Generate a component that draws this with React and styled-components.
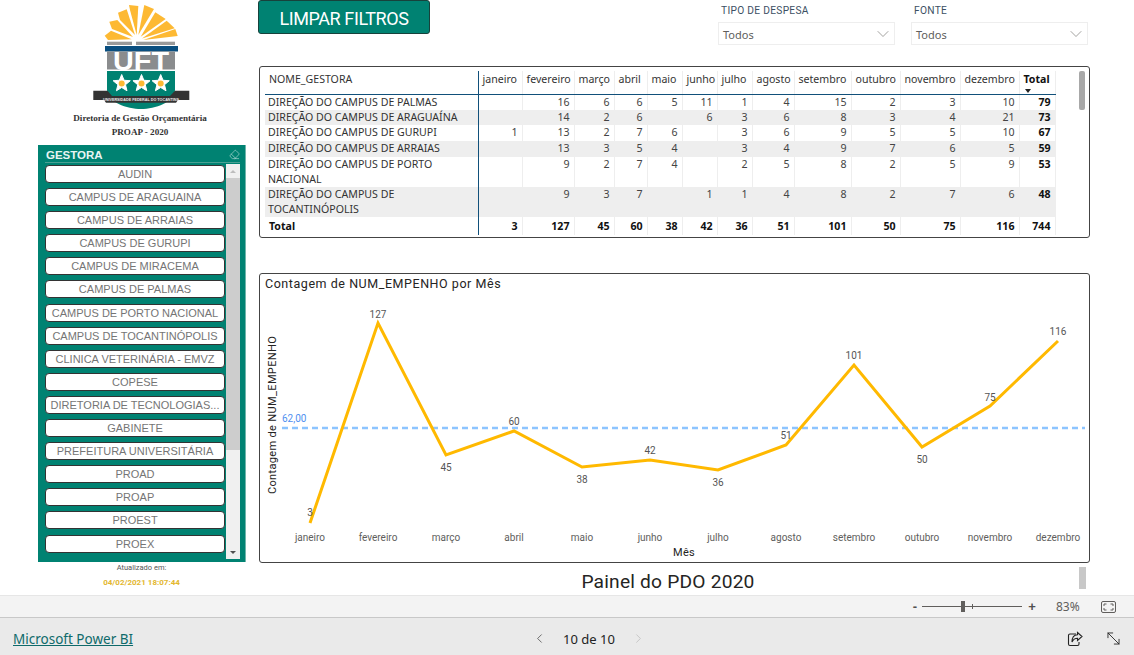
import React from 'react'
import styled, { createGlobalStyle } from 'styled-components'
import { ChevronDown, ChevronLeft, ChevronRight, Eraser, MoveDiagonal2 } from 'lucide-react'

const GlobalStyle = createGlobalStyle`
    html, body {
        margin: 0;
        padding: 0;
        background: #fff;
        overflow: hidden;
    }
`

const din = `Roboto, "Liberation Sans", sans-serif`
const segoe = `"Noto Sans", "Open Sans", sans-serif`

const gestoras = ['AUDIN', 'CAMPUS DE ARAGUAINA', 'CAMPUS DE ARRAIAS', 'CAMPUS DE GURUPI', 'CAMPUS DE MIRACEMA', 'CAMPUS DE PALMAS', 'CAMPUS DE PORTO NACIONAL', 'CAMPUS DE TOCANTINÓPOLIS', 'CLINICA VETERINÁRIA - EMVZ', 'COPESE', 'DIRETORIA DE TECNOLOGIAS...', 'GABINETE', 'PREFEITURA UNIVERSITÁRIA', 'PROAD', 'PROAP', 'PROEST', 'PROEX']

const columns = [
    { name: 'NOME_GESTORA', width: 213 }, { name: 'janeiro', width: 44 }, { name: 'fevereiro', width: 52 },
    { name: 'março', width: 40 }, { name: 'abril', width: 33 }, { name: 'maio', width: 35 }, { name: 'junho', width: 35 },
    { name: 'julho', width: 35 }, { name: 'agosto', width: 42 }, { name: 'setembro', width: 57 }, { name: 'outubro', width: 49 },
    { name: 'novembro', width: 60 }, { name: 'dezembro', width: 59 }, { name: 'Total', width: 36 },
]

const rows = [
    { height: 16, cells: ['DIREÇÃO DO CAMPUS DE PALMAS', '', 16, 6, 6, 5, 11, 1, 4, 15, 2, 3, 10, 79] },
    { height: 15, cells: ['DIREÇÃO DO CAMPUS DE ARAGUAÍNA', '', 14, 2, 6, '', 6, 3, 6, 8, 3, 4, 21, 73] },
    { height: 16, cells: ['DIREÇÃO DO CAMPUS DE GURUPI', 1, 13, 2, 7, 6, '', 3, 6, 9, 5, 5, 10, 67] },
    { height: 16, cells: ['DIREÇÃO DO CAMPUS DE ARRAIAS', '', 13, 3, 5, 4, '', 3, 4, 9, 7, 6, 5, 59] },
    { height: 30, cells: ['DIREÇÃO DO CAMPUS DE PORTO NACIONAL', '', 9, 2, 7, 4, '', 2, 5, 8, 2, 5, 9, 53] },
    { height: 29, cells: ['DIREÇÃO DO CAMPUS DE TOCANTINÓPOLIS', '', 9, 3, 7, '', 1, 1, 4, 8, 2, 7, 6, 48] },
]

const totals = ['Total', 3, 127, 45, 60, 38, 42, 36, 51, 101, 50, 75, 116, 744]

const months = [
    { name: 'janeiro', value: 3, x: 310, y: 523, labelY: 516 },
    { name: 'fevereiro', value: 127, x: 378, y: 323, labelY: 318 },
    { name: 'março', value: 45, x: 446, y: 455, labelY: 471 },
    { name: 'abril', value: 60, x: 514, y: 431, labelY: 425 },
    { name: 'maio', value: 38, x: 582, y: 467, labelY: 483 },
    { name: 'junho', value: 42, x: 650, y: 460, labelY: 454 },
    { name: 'julho', value: 36, x: 718, y: 470, labelY: 486 },
    { name: 'agosto', value: 51, x: 786, y: 445, labelY: 439 },
    { name: 'setembro', value: 101, x: 854, y: 365, labelY: 359 },
    { name: 'outubro', value: 50, x: 922, y: 447, labelY: 463 },
    { name: 'novembro', value: 75, x: 990, y: 406, labelY: 401 },
    { name: 'dezembro', value: 116, x: 1058, y: 341, labelY: 335 },
]

const Page = styled.div`
    width: 1134px;
    height: 655px;
    display: flex;
    flex-direction: column;
    overflow: hidden;
    color: #222;
`

const Canvas = styled.div`
    height: 595px;
    display: flex;
    align-items: flex-start;
    padding-left: 38px;
    box-sizing: border-box;
`

const Sidebar = styled.aside`
    width: 208px;
    display: flex;
    flex-direction: column;
    align-items: center;
`

const Logo = styled.svg`
    display: block;
    width: 110px;
    height: 110px;
    margin-right: 4px;
`

const OrgBlock = styled.div`
    height: 35px;
    padding: 1px 4px 0 0;
    box-sizing: border-box;
    width: 100%;
`

const OrgLine = styled.div`
    font: bold 9.1px/14px "Liberation Serif", serif;
    color: #333;
    text-align: center;
`

const SlicerPanel = styled.section`
    width: 208px;
    height: 417px;
    background: #008272;
    border-right: 1px solid #6fb5ab;
    box-sizing: border-box;
    padding: 3px 5px 0 7px;
`

const SlicerHeader = styled.div`
    height: 13px;
    padding-bottom: 1px;
    border-bottom: 1px solid #4aa093;
    display: flex;
    align-items: center;
    justify-content: space-between;
    font: bold 11.5px "Liberation Sans", sans-serif;
    color: #e8f4f2;
    padding-left: 1px;
`

const SlicerBody = styled.div`
    display: flex;
    justify-content: space-between;
    margin-top: 1px;
`

const SlicerList = styled.ul`
    list-style: none;
    margin: 0;
    padding: 1px 0 0;
    width: 180px;
    display: flex;
    flex-direction: column;
    gap: 5.1px;
`

const SlicerItem = styled.li`
    height: 18px;
    box-sizing: border-box;
    background: #fff;
    border: 1px solid #333;
    border-radius: 4px;
    font: 11px/16px "Liberation Sans", sans-serif;
    color: #757575;
    text-align: center;
    white-space: nowrap;
    overflow: hidden;
`

const SlicerScroll = styled.div`
    width: 14px;
    height: 395px;
    background: #f0f0f0;
    display: flex;
    flex-direction: column;
    align-items: center;
    justify-content: space-between;
    padding: 6px 0 5px;
    box-sizing: border-box;
    position: relative;
`

const ScrollThumb = styled.div`
    position: absolute;
    top: 14px;
    left: 0;
    right: 0;
    height: 272px;
    background: #cdcdcd;
`

const Arrow = styled.div`
    width: 0;
    height: 0;
    border-left: 3px solid transparent;
    border-right: 3px solid transparent;
    ${p => p.$up ? 'border-bottom: 3px solid #bdbdbd;' : 'border-top: 3px solid #505050;'}
`

const UpdatedLabel = styled.div`
    margin-top: 1px;
    padding-right: 1px;
    font: 7.5px/10px ${din};
    color: #555;
`

const UpdatedDate = styled.div`
    margin-top: 5px;
    padding-right: 1px;
    font: bold 8px/10px ${din};
    color: #e3b72e;
`

const Main = styled.main`
    margin-left: 12px;
    width: 832px;
    display: flex;
    flex-direction: column;
`

const TopBar = styled.div`
    height: 66px;
    display: flex;
    align-items: flex-start;
    gap: 16px;
`

const ClearButton = styled.button`
    flex: none;
    width: 172px;
    height: 34px;
    padding: 3px 0 0;
    background: #008272;
    color: #fff;
    border: 1px solid #17423c;
    border-radius: 3px;
    font: 400 18px ${din};
    letter-spacing: -0.4px;
    margin-right: 272px;
`

const Filter = styled.div`
    flex: none;
    width: 177px;
`

const FilterLabel = styled.div`
    height: 22px;
    padding: 5px 0 0 3px;
    box-sizing: border-box;
    font: 10.2px/12px ${din};
    letter-spacing: 0.3px;
    color: #3c5064;
`

const Dropdown = styled.div`
    height: 23px;
    box-sizing: border-box;
    border: 1px solid #eee;
    display: flex;
    align-items: center;
    justify-content: space-between;
    padding: 1px 1px 0 4px;
    font: 11px ${segoe};
    color: #605e5c;
`

const Card = styled.section`
    width: 831px;
    margin-left: 1px;
    box-sizing: border-box;
    border: 1px solid #444;
    border-radius: 3px;
`

const TableCard = styled(Card)`
    height: 172px;
    display: flex;
    justify-content: space-between;
    padding: 4px 4px 0 5px;
`

const ChartCard = styled(Card)`
    height: 290px;
    margin-top: 35px;
`

const Table = styled.table`
    table-layout: fixed;
    border-collapse: collapse;
    width: 790px;
    height: fit-content;
    font: 10.6px/15px ${segoe};
    color: #333;
`

const Col = styled.col`
    width: ${p => p.$width}px;
`

const HeadCell = styled.th`
    height: 23px;
    padding: 0 0 5px 4px;
    box-sizing: border-box;
    font-weight: ${p => p.$bold ? 700 : 400};
    text-align: left;
    white-space: nowrap;
    vertical-align: middle;
    border-bottom: 1px solid #11507a;
    border-right: 1px solid ${p => p.$first ? '#11507a' : '#eee'};
    position: relative;
    color: ${p => p.$bold ? '#111' : '#333'};
`

const SortMark = styled.span`
    position: absolute;
    left: 5px;
    bottom: 1px;
    width: 0;
    height: 0;
    border-left: 3px solid transparent;
    border-right: 3px solid transparent;
    border-top: 4px solid #222;
`

const Row = styled.tr`
    height: ${p => p.$height}px;
    background: ${p => p.$shaded ? '#eee' : '#fff'};
`

const NameCell = styled.td`
    padding: ${p => p.$bold ? '2px 4px 0 4px' : '0 4px 0 3px'};
    font-weight: ${p => p.$bold ? 700 : 400};
    color: ${p => p.$bold ? '#111' : '#333'};
    border-right: 1px solid #11507a;
    vertical-align: top;
`

const NumCell = styled.td`
    padding: ${p => p.$total ? '2px' : '0'} 4px 0 0;
    text-align: right;
    vertical-align: top;
    font-weight: ${p => p.$bold ? 700 : 400};
    color: ${p => p.$bold ? '#111' : '#444'};
    border-right: 1px solid #eee;
`

const TableThumb = styled.div`
    width: 6px;
    height: 39px;
    border-radius: 2px;
    background: #a8a8a8;
`

const ChartTitle = styled.h2`
    margin: 0;
    height: 19px;
    padding: 2px 0 0 5px;
    box-sizing: border-box;
    font: 400 12.5px/15px ${din};
    letter-spacing: 0.55px;
    color: #252423;
`

const Chart = styled.svg`
    display: block;
    font-family: ${din};
`

const PageTitleRow = styled.div`
    margin-top: 8px;
    position: relative;
`

const PageTitle = styled.div`
    padding-right: 12px;
    text-align: center;
    font: 19.2px/22px ${din};
    color: #252423;
    letter-spacing: 0.2px;
`

const PageThumb = styled.div`
    position: absolute;
    left: 821px;
    top: -4px;
    width: 7px;
    height: 22px;
    background: #c8c8c8;
`

const ZoomBar = styled.div`
    height: 21px;
    background: #f3f3f3;
    border-top: 1px solid #e6e6e6;
    border-bottom: 1px solid #c8c8c8;
    display: flex;
    align-items: center;
    justify-content: flex-end;
    padding-right: 18px;
    font: 12px ${segoe};
    color: #605e5c;
`

const ZoomSign = styled.span`
    font: 700 13px "Liberation Sans", sans-serif;
    color: #505050;
    width: 8px;
    text-align: center;
`

const ZoomTrack = styled.div`
    position: relative;
    width: 100px;
    height: 1px;
    margin: 0 6px 0 3px;
    background: #605e5c;
`

const ZoomHandle = styled.div`
    position: absolute;
    left: 39px;
    top: -5px;
    width: 4px;
    height: 11px;
    background: #605e5c;
`

const ZoomTick = styled.div`
    position: absolute;
    left: 50px;
    top: -2px;
    width: 1px;
    height: 5px;
    background: #605e5c;
`

const ZoomValue = styled.span`
    margin: 0 22px 0 20px;
    width: 23px;
`

const Footer = styled.footer`
    flex: 1;
    background: #eaeaea;
    display: grid;
    grid-template-columns: 519px auto 1fr;
    align-items: center;
    padding: 4px 11px 0 13px;
`

const BrandLink = styled.a`
    font: 13.5px ${segoe};
    color: #0f6a6a;
    text-decoration: underline;
`

const Pager = styled.div`
    display: flex;
    align-items: center;
    gap: 16px;
    font: 13px ${segoe};
    color: #222;
`

const FooterActions = styled.div`
    display: flex;
    justify-content: flex-end;
    align-items: center;
    gap: 21px;
    color: #222;
`

const Star = ({ x }) => {
    const points = []
    for (let i = 0; i < 10; i++) {
        const r = i % 2 ? 4 : 9
        const a = -Math.PI / 2 + i * Math.PI / 5
        points.push(`${x + r * Math.cos(a)},${83.5 + r * Math.sin(a)}`)
    }
    return (
        <g>
            <polygon points={points.join(' ')} fill='#fff' stroke='#fff' strokeWidth='1' strokeLinejoin='round' />
            <circle cx={x} cy='83.5' r='3' fill='#fdb933' />
        </g>
    )
}

const UftLogo = () => (
    <Logo viewBox='85 0 110 110'>
        <g fill='#fdb933'>
            <polygon points='104.7,35.7 111,30.7 131.7,39.3 108,40' />
            <polygon points='109.3,21.7 117.3,20 133,37 112,29' />
            <polygon points='118,12.7 126.7,9.3 135,35 120,20' />
            <polygon points='129,5 138.3,6 136.7,35 130,10' />
            <polygon points='144.3,5 154,9 138.3,35' />
            <polygon points='155.3,12.3 165.7,19 140.7,36.7' />
            <polygon points='166.7,20.7 174.7,28.3 142,38.5' />
            <polygon points='175.3,29 177.7,36 143.3,40' />
        </g>
        <rect x='107' y='41.7' width='25' height='3.3' fill='#9a9a9a' />
        <rect x='136' y='41.7' width='39' height='3.3' fill='#9a9a9a' />
        <rect x='105' y='46' width='73' height='5.5' fill='#0a4f80' />
        <rect x='107' y='51.5' width='68' height='18' fill='#8a8c8e' />
        <text x='141' y='69.5' textAnchor='middle' fill='#fff' fontFamily='Liberation Sans' fontWeight='700' fontSize='25' textLength='56' lengthAdjust='spacingAndGlyphs'>UFT</text>
        <path d='M107,71 H175 V90 C175,102 155,109 141,109 C127,109 107,102 107,90 Z' fill='#008272' />
        <Star x={121.7} />
        <Star x={141.5} />
        <Star x={160.7} />
        <polygon points='93.3,90.7 107.5,90.7 112,96 170,96 175,90.7 189.3,90.7 189.3,100 178,100 176,102.7 106,102.7 104,100 93.3,100' fill='#333' />
        <text x='141' y='101' textAnchor='middle' fill='#eee' fontFamily='Liberation Sans' fontSize='4.3' fontWeight='700' textLength='76' lengthAdjust='spacingAndGlyphs'>UNIVERSIDADE FEDERAL DO TOCANTINS</text>
    </Logo>
)

const LineChart = () => (
    <Chart width='829' height='269' viewBox='260 293 829 269'>
        <text x='276' y='415' transform='rotate(-90 276 415)' textAnchor='middle' fontSize='11' letterSpacing='0.35' fill='#252423'>Contagem de NUM_EMPENHO</text>
        <line x1='282' x2='1085' y1='428' y2='428' stroke='#8cc4ff' strokeWidth='2.5' strokeDasharray='6 4' />
        <text x='282' y='422' fontSize='10' fill='#4f8ff0'>62,00</text>
        <polyline points={months.map(m => `${m.x},${m.y}`).join(' ')} fill='none' stroke='#ffb900' strokeWidth='3' strokeLinejoin='miter' />
        {months.map(m => (
            <g key={m.name}>
                <text x={m.x} y={m.labelY} textAnchor='middle' fontSize='10' fill='#555'>{m.value}</text>
                <text x={m.x} y={541} textAnchor='middle' fontSize='10' fill='#605e5c'>{m.name}</text>
            </g>
        ))}
        <text x='684' y='556' textAnchor='middle' fontSize='11' letterSpacing='0.3' fill='#252423'>Mês</text>
    </Chart>
)

const ShareIcon = () => (
    <svg width='16' height='16' viewBox='0 0 16 16' fill='none' stroke='#222' strokeWidth='1.1'>
        <path d='M9 3H3a1.5 1.5 0 0 0-1.500 1.500V13A1.500 1.500 0 0 0 3 14.500h7.500A1.500 1.500 0 0 0 12 13v-2' />
        <path d='M10.500 1.500 15 5.500 10.500 9.500V7.300C8 7.300 6.200 8.500 5 11 5 7 7 4 10.500 3.800Z' />
    </svg>
)

const FitIcon = () => (
    <svg width='15' height='12' viewBox='0 0 15 12' fill='none' stroke='#605e5c' strokeWidth='1'>
        <rect x='0.500' y='0.500' width='14' height='11' rx='1.500' />
        <path d='M3 5V3h2.500M9.500 3H12v2M12 7v2H9.500M5.500 9H3V7' />
    </svg>
)

const App = () => (
    <Page>
        <GlobalStyle />
        <Canvas>
            <Sidebar>
                <UftLogo />
                <OrgBlock>
                    <OrgLine>Diretoria de Gestão Orçamentária</OrgLine>
                    <OrgLine>PROAP - 2020</OrgLine>
                </OrgBlock>
                <SlicerPanel>
                    <SlicerHeader>
                        GESTORA
                        <Eraser size={11} strokeWidth={1.2} color='#d5ebe7' />
                    </SlicerHeader>
                    <SlicerBody>
                        <SlicerList>
                            {gestoras.map(name => <SlicerItem key={name}>{name}</SlicerItem>)}
                        </SlicerList>
                        <SlicerScroll>
                            <Arrow $up />
                            <ScrollThumb />
                            <Arrow />
                        </SlicerScroll>
                    </SlicerBody>
                </SlicerPanel>
                <UpdatedLabel>Atualizado em:</UpdatedLabel>
                <UpdatedDate>04/02/2021 18:07:44</UpdatedDate>
            </Sidebar>
            <Main>
                <TopBar>
                    <ClearButton>LIMPAR FILTROS</ClearButton>
                    <Filter>
                        <FilterLabel>TIPO DE DESPESA</FilterLabel>
                        <Dropdown>Todos<ChevronDown size={20} strokeWidth={0.7} color='#605e5c' /></Dropdown>
                    </Filter>
                    <Filter>
                        <FilterLabel>FONTE</FilterLabel>
                        <Dropdown>Todos<ChevronDown size={20} strokeWidth={0.7} color='#605e5c' /></Dropdown>
                    </Filter>
                </TopBar>
                <TableCard>
                    <Table>
                        <colgroup>
                            {columns.map(c => <Col key={c.name} $width={c.width} />)}
                        </colgroup>
                        <thead>
                            <tr>
                                {columns.map((c, i) => (
                                    <HeadCell key={c.name} $first={i === 0} $bold={c.name === 'Total'}>
                                        {c.name}
                                        {c.name === 'Total' && <SortMark />}
                                    </HeadCell>
                                ))}
                            </tr>
                        </thead>
                        <tbody>
                            {rows.map((row, i) => (
                                <Row key={row.cells[0]} $height={row.height} $shaded={i % 2 === 1}>
                                    <NameCell>{row.cells[0]}</NameCell>
                                    {row.cells.slice(1).map((v, j) => (
                                        <NumCell key={j} $bold={j === 12}>{v}</NumCell>
                                    ))}
                                </Row>
                            ))}
                            <Row $height={18}>
                                <NameCell $bold>{totals[0]}</NameCell>
                                {totals.slice(1).map((v, j) => <NumCell key={j} $bold $total>{v}</NumCell>)}
                            </Row>
                        </tbody>
                    </Table>
                    <TableThumb />
                </TableCard>
                <ChartCard>
                    <ChartTitle>Contagem de NUM_EMPENHO por Mês</ChartTitle>
                    <LineChart />
                </ChartCard>
                <PageTitleRow>
                    <PageTitle>Painel do PDO 2020</PageTitle>
                    <PageThumb />
                </PageTitleRow>
            </Main>
        </Canvas>
        <ZoomBar>
            <ZoomSign>-</ZoomSign>
            <ZoomTrack>
                <ZoomHandle />
                <ZoomTick />
            </ZoomTrack>
            <ZoomSign>+</ZoomSign>
            <ZoomValue>83%</ZoomValue>
            <FitIcon />
        </ZoomBar>
        <Footer>
            <div><BrandLink>Microsoft Power BI</BrandLink></div>
            <Pager>
                <ChevronLeft size={15} strokeWidth={1.2} color='#444' />
                10 de 10
                <ChevronRight size={15} strokeWidth={1.2} color='#bbb' />
            </Pager>
            <FooterActions>
                <ShareIcon />
                <MoveDiagonal2 size={19} strokeWidth={1.1} />
            </FooterActions>
        </Footer>
    </Page>
)

export default App
